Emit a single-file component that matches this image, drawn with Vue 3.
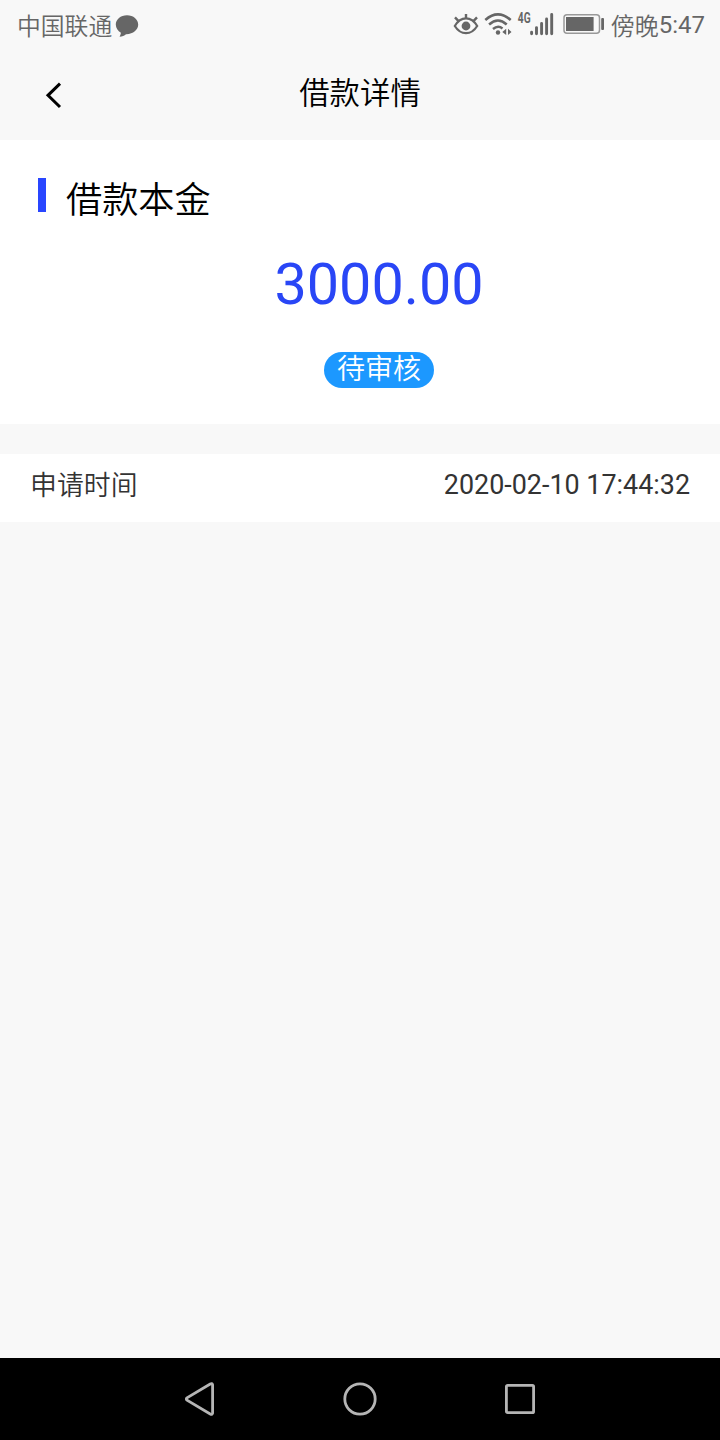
<script setup>
const loan = {
  amount: '3000.00',
  status: '待审核',
  appliedAt: '2020-02-10 17:44:32'
}
</script>

<template>
  <div class="screen">
    <div class="status-bar">
      <span class="carrier">中国联通</span>
      <svg class="bubble" width="24" height="24" viewBox="0 0 24 24">
        <path d="M12 1.200C5.600 1.200.8 5.400.8 10.600c0 3.700 2.100 6.500 5.100 8.200-.1 1.500-.6 2.700-1.300 3.900 2.500-.2 4.900-1.200 6.400-2.500 6.900.2 12.200-4.200 12.200-9.600C23.200 5.400 18.400 1.200 12 1.200Z" fill="#666" />
      </svg>
      <svg class="indicators" width="152" height="50" viewBox="0 0 152 50" fill="none" stroke="#666">
        <path d="M2.800 26Q7.300 18.300 14 18.300T25.200 26Q20.700 33.200 14 33.200T2.800 26Z" stroke-width="2.200" />
        <circle cx="14" cy="26" r="4.400" fill="#666" stroke="none" />
        <path d="M14 18.500V14M6.800 21.300 3 17.300M21.200 21.300 25 17.300" stroke-width="2.400" />
        <path d="M33.300 20Q46 8.800 58.700 20M37.100 24.500Q46 16.500 54.700 24.500M41 29Q46 24.800 50.500 28.400" stroke-width="2.500" />
        <circle cx="46" cy="32.500" r="2.200" fill="#666" stroke="none" />
        <path d="M54.200 28.700V34.900L50.300 32Z M56 28.700V34.900L59.500 32Z" fill="#666" stroke="none" />
        <text class="network" x="65.800" y="22.800" textLength="12.800" lengthAdjust="spacingAndGlyphs">4G</text>
        <path d="M79.600 32.200V33.700M84.500 27.600V33.700M89.600 23.500V33.700M94.600 19V33.700M99.700 14.400V33.700" stroke-width="2.900" stroke-linecap="round" />
        <rect x="112" y="14.700" width="35.500" height="18.600" rx="3" stroke="#999" stroke-width="1.500" />
        <rect x="114" y="17" width="27.600" height="14" fill="#666" stroke="none" />
        <rect x="149.200" y="18" width="2.800" height="12" rx="1" fill="#666" stroke="none" />
      </svg>
      <span class="clock"><span class="cjk">傍晚</span><span class="digits">5:47</span></span>
    </div>
    <header class="nav-header">
      <svg class="back" width="20" height="28" viewBox="0 0 20 28">
        <path d="M17 2.700 5 14.300 17 26" fill="none" stroke="#000" stroke-width="3" />
      </svg>
      <h1>借款详情</h1>
    </header>
    <main>
      <section class="principal">
        <h2><i class="marker"></i><span>借款本金</span></h2>
        <div class="amount">{{ loan.amount }}</div>
        <div class="badge">{{ loan.status }}</div>
      </section>
      <section class="row">
        <span class="label">申请时间</span>
        <time>{{ loan.appliedAt }}</time>
      </section>
    </main>
    <footer class="system-nav">
      <svg width="36" height="36" viewBox="0 0 36 36"><path d="M30.600 3.800V32.200Q30.200 34 28.200 33L5 19.200Q3.600 18 5 16.800L28.200 3Q30.200 2 30.600 3.800Z" /></svg>
      <svg width="36" height="36" viewBox="0 0 36 36"><circle cx="18" cy="18" r="15.200" /></svg>
      <svg width="36" height="36" viewBox="0 0 36 36"><rect x="4.400" y="4.400" width="27.200" height="27.200" rx="1.200" /></svg>
    </footer>
  </div>
</template>

<style>
body {
  margin: 0;
}
</style>

<style scoped>
.screen {
  width: 720px;
  height: 1440px;
  display: flex;
  flex-direction: column;
  background: #f8f8f8;
  font-family: Roboto, "Noto Sans CJK SC", sans-serif;
  overflow: hidden;
}
.status-bar {
  height: 50px;
  display: flex;
  align-items: center;
  padding: 0 15px 0 17px;
  box-sizing: border-box;
  color: #666;
  font-size: 24px;
  line-height: 50px;
  white-space: nowrap;
}
.carrier,
.cjk,
.label,
.badge,
h1,
h2 {
  font-family: "Noto Sans CJK SC", sans-serif;
  font-weight: 350;
}
.carrier {
  width: 95px;
  font-size: 23.800px;
}
.bubble {
  margin: 2px 0 0 3px;
}
.indicators {
  margin-left: auto;
}
.network {
  font-family: Roboto, sans-serif;
  font-size: 14.500px;
  font-weight: 700;
  fill: #666;
  stroke: none;
}
.clock {
  display: flex;
  margin-left: 7px;
}
.nav-header {
  height: 90px;
  display: grid;
  grid-template-columns: 80px 1fr 80px;
  align-items: center;
}
.back {
  margin-left: 43px;
}
h1 {
  margin: 0;
  padding-bottom: 7px;
  text-align: center;
  font-size: 30.400px;
  line-height: 43px;
  color: #000;
}
main {
  flex: 1;
}
.principal {
  height: 284px;
  box-sizing: border-box;
  padding: 38px 0 0 38px;
  background: #fff;
  display: flex;
  flex-direction: column;
  align-items: center;
}
h2 {
  align-self: stretch;
  display: flex;
  margin: 0;
  height: 34px;
  gap: 20px;
  font-size: 36.200px;
  line-height: 38px;
  color: #000;
}
.marker {
  width: 8px;
  height: 34px;
  background: #2946ff;
}
.amount {
  margin-top: 38px;
  height: 70px;
  font-size: 57.500px;
  line-height: 70px;
  color: #2946f6;
}
.badge {
  margin-top: 32px;
  width: 110px;
  height: 36px;
  border-radius: 18px;
  background: #1c98ff;
  color: #fff;
  font-size: 28px;
  line-height: 31px;
  text-align: center;
}
.row {
  margin-top: 30px;
  height: 68px;
  box-sizing: border-box;
  padding: 0 30px 6px;
  display: flex;
  align-items: center;
  justify-content: space-between;
  background: #fff;
  color: #333;
  font-size: 26.900px;
}
.label {
  padding-bottom: 4px;
}
.system-nav {
  height: 82px;
  display: flex;
  justify-content: center;
  align-items: center;
  gap: 124px;
  background: #000;
}
.system-nav svg {
  fill: none;
  stroke: #b5b5b5;
  stroke-width: 2.800;
}
</style>
